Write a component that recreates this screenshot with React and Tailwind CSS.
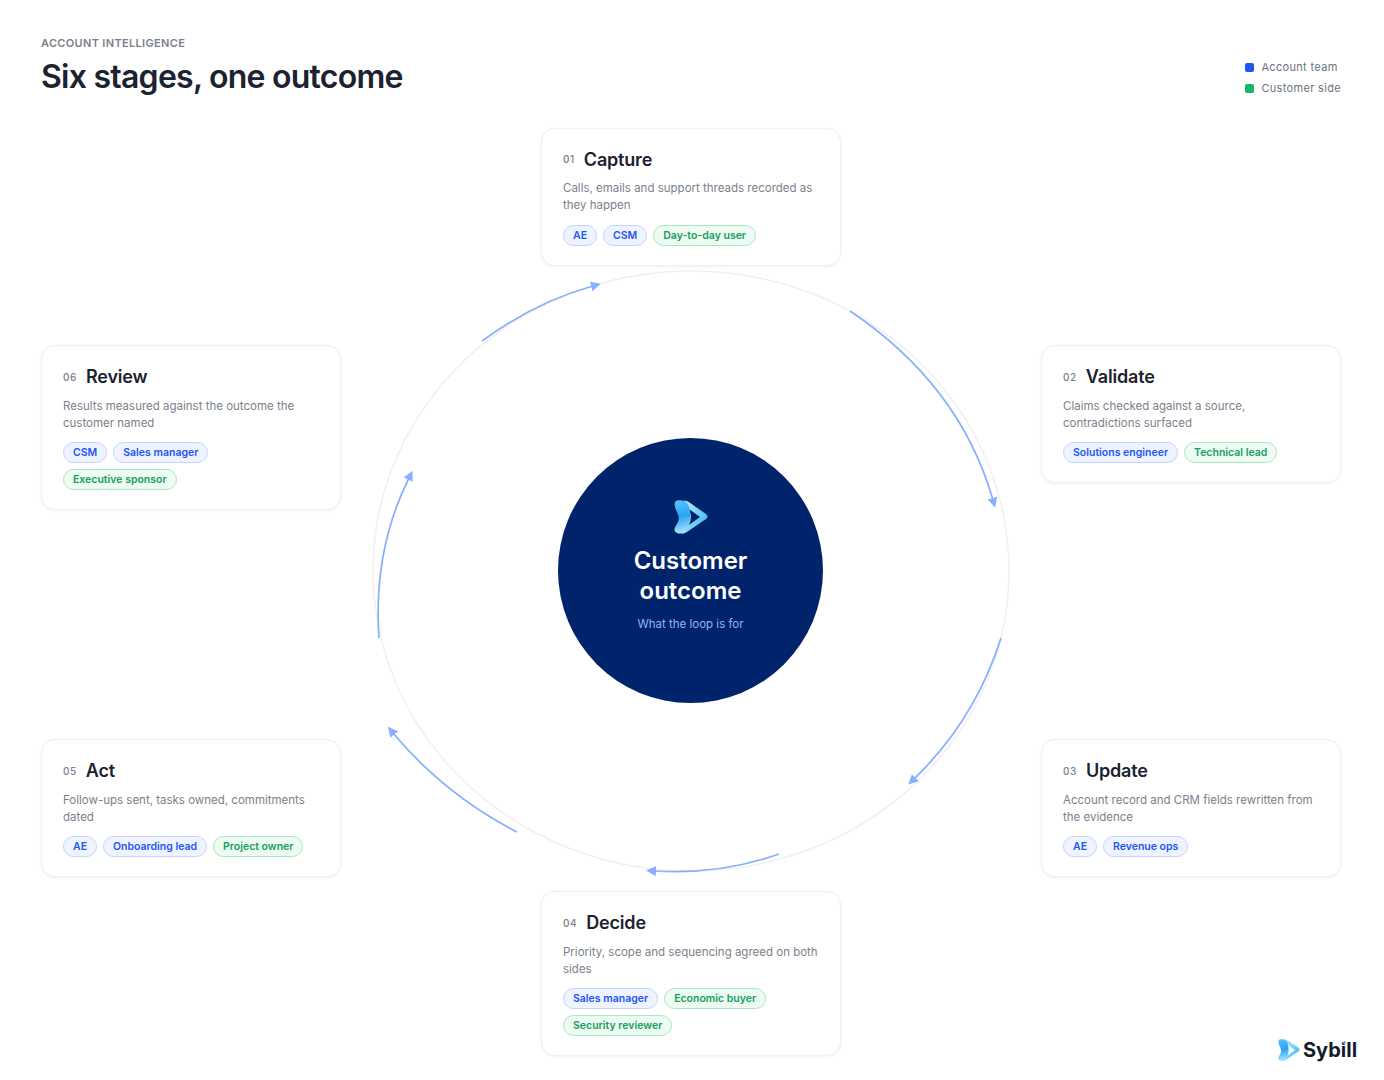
import React from "react";

const stages = [
  {
    num: "01",
    title: "Capture",
    desc: "Calls, emails and support threads recorded as they happen",
    pos: "left-[541px] top-[127.5px]",
    team: ["AE", "CSM"],
    customer: ["Day-to-day user"],
  },
  {
    num: "02",
    title: "Validate",
    desc: "Claims checked against a source, contradictions surfaced",
    pos: "left-[1041px] top-[345px]",
    team: ["Solutions engineer"],
    customer: ["Technical lead"],
  },
  {
    num: "03",
    title: "Update",
    desc: "Account record and CRM fields rewritten from the evidence",
    pos: "left-[1041px] top-[739px]",
    team: ["AE", "Revenue ops"],
    customer: [],
  },
  {
    num: "04",
    title: "Decide",
    desc: "Priority, scope and sequencing agreed on both sides",
    pos: "left-[541px] top-[891px]",
    team: ["Sales manager"],
    customer: ["Economic buyer", "Security reviewer"],
  },
  {
    num: "05",
    title: "Act",
    desc: "Follow-ups sent, tasks owned, commitments dated",
    pos: "left-[41px] top-[739px]",
    team: ["AE", "Onboarding lead"],
    customer: ["Project owner"],
  },
  {
    num: "06",
    title: "Review",
    desc: "Results measured against the outcome the customer named",
    pos: "left-[41px] top-[345px]",
    team: ["CSM", "Sales manager"],
    customer: ["Executive sponsor"],
  },
];

const arrows = [
  "M850 311 Q960 385 993 500",
  "M1001 638 Q975 720 914 779",
  "M779 854 Q720 875 654 871",
  "M517 832 Q445 795 393 733",
  "M379 638 Q373 550 409 478",
  "M482 341 Q535 302 593 286",
];

const Logo = ({ className, id, notch }) => (
  <svg viewBox="0 0 34 34" className={className}>
    <defs>
      <linearGradient id={`${id}-a`} x1="0.2" y1="0" x2="0.3" y2="1">
        <stop offset="0" stopColor="#55c4fa" />
        <stop offset="0.5" stopColor="#2aa3f3" />
        <stop offset="1" stopColor="#a9e5fc" />
      </linearGradient>
      <linearGradient id={`${id}-b`} x1="0" y1="0" x2="1" y2="0.6">
        <stop offset="0" stopColor="#c9f0fd" />
        <stop offset="1" stopColor="#43bdf6" />
      </linearGradient>
    </defs>
    <path
      d="M10 1C11 .5 13 1 14 1.600L32 14C34 15.500 34 17.500 32 19L13 32C11 33.500 9 33.500 8 33.500z"
      fill={`url(#${id}-b)`}
    />
    <path d="M15 9L26 17L15 25C17.500 19 17.500 15 15 9z" fill={notch} />
    <path
      d="M1 2C2 0 5 0 8 .5C12 1 15 4 15.500 9C16.500 15 16 20 14.500 25C13.500 29 12 33 8 33.500C5 34 1 33 .5 30C0 28 2 26 3.500 23C5.500 19 5 16 3 12C1.500 9 0 5 1 2z"
      fill={`url(#${id}-a)`}
    />
  </svg>
);

const Chip = ({ label, customer }) => (
  <span
    className={
      customer
        ? "h-[21px] rounded-full border border-[#a5e8c4] bg-[#edfbf3] px-[9px] text-[10.5px] leading-[19px] font-semibold text-[#16a05d]"
        : "h-[21px] rounded-full border border-[#c3d4ff] bg-[#eef3ff] px-[9px] text-[10.5px] leading-[19px] font-semibold text-[#1d56f0]"
    }
  >
    {label}
  </span>
);

const StageCard = ({ stage }) => (
  <div
    className={`absolute ${stage.pos} w-[300px] rounded-[14px] border border-[#eef0f2] bg-white px-[21px] pt-[20px] pb-[19px] shadow-[0_1px_3px_rgba(16,24,40,0.06)]`}
  >
    <div className="flex items-center gap-[9px]">
      <span className="text-[10px] font-medium tracking-[0.06em] text-[#7a808a]">{stage.num}</span>
      <span className="text-[18px] leading-[22px] font-semibold tracking-[-0.01em] text-[#1b2230]">
        {stage.title}
      </span>
    </div>
    <p className="mt-[9.5px] text-[11.5px] leading-[17.25px] text-[#7b818b]">{stage.desc}</p>
    <div className="mt-[10px] flex flex-wrap gap-[6px]">
      {stage.team.map((t) => (
        <Chip key={t} label={t} />
      ))}
      {stage.customer.map((t) => (
        <Chip key={t} label={t} customer />
      ))}
    </div>
  </div>
);

export default function App() {
  return (
    <div className="relative h-[1080px] w-[1384px] overflow-hidden bg-white font-['Inter',sans-serif]">
      <div className="flex items-start justify-between pt-[36px] pr-[43px] pl-[41px]">
        <div>
          <div className="text-[11px] leading-[14px] font-semibold tracking-[0.03em] text-[#7b818b]">
            ACCOUNT INTELLIGENCE
          </div>
          <h1 className="mt-[6.5px] text-[32px] leading-[40px] font-semibold tracking-[-0.75px] text-[#1b2230]">
            Six stages, one outcome
          </h1>
        </div>
        <div className="mt-[24px] flex flex-col gap-[7px]">
          <div className="flex items-center gap-[7px] text-[11px] leading-[14px] tracking-[0.03em] text-[#6b7280]">
            <span className="h-[9px] w-[9px] rounded-[2px] bg-[#1d56f0]" />
            Account team
          </div>
          <div className="flex items-center gap-[7px] text-[11px] leading-[14px] tracking-[0.03em] text-[#6b7280]">
            <span className="h-[9px] w-[9px] rounded-[2px] bg-[#12b76a]" />
            Customer side
          </div>
        </div>
      </div>

      <svg viewBox="0 0 1384 1080" className="absolute inset-0 h-[1080px] w-[1384px]">
        <defs>
          <marker id="head" viewBox="0 0 10 10" refX="2" refY="5" markerWidth="10" markerHeight="10" markerUnits="userSpaceOnUse" orient="auto">
            <path d="M0 0L10 5L0 10z" fill="#8aafff" />
          </marker>
        </defs>
        <ellipse cx="691" cy="571" rx="318" ry="300" fill="none" stroke="#f0f0f2" strokeWidth="1.500" />
        {arrows.map((d) => (
          <path key={d} d={d} fill="none" stroke="#8aafff" strokeWidth="1.750" markerEnd="url(#head)" />
        ))}
      </svg>

      {stages.map((s) => (
        <StageCard key={s.num} stage={s} />
      ))}

      <div className="absolute top-[438px] left-[558px] flex h-[265px] w-[265px] flex-col items-center rounded-full bg-[#00246b] pt-[62px] text-center">
        <Logo id="logo-center" notch="#00246b" className="h-[34px] w-[34px]" />
        <div className="mt-[12px] text-[24px] leading-[30px] font-semibold text-white">
          Customer
          <br />
          outcome
        </div>
        <div className="mt-[10px] text-[11.5px] leading-[16px] text-[#8fb3ff]">What the loop is for</div>
      </div>

      <div className="absolute top-[1037px] left-[1278px] flex items-center gap-[3px]">
        <Logo id="logo-corner" notch="#ffffff" className="h-[22px] w-[22px]" />
        <span className="text-[20px] leading-[26px] font-bold text-[#141c2b]">Sybill</span>
        <span className="absolute top-[4px] left-[64.5px] h-[3px] w-[3px] rounded-full bg-[#4fb8f7]" />
      </div>
    </div>
  );
}
